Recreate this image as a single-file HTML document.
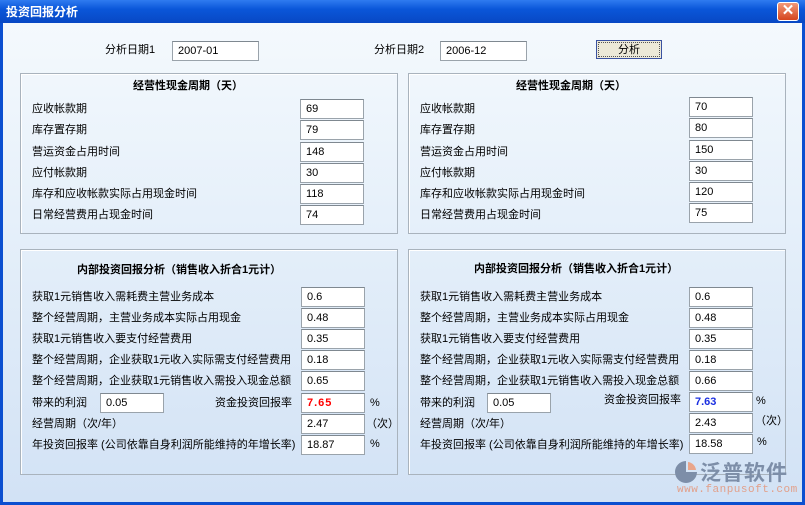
<!DOCTYPE html><html><head><meta charset="utf-8"><style>
*{margin:0;padding:0;box-sizing:border-box}
body{width:805px;height:505px;overflow:hidden;font-family:"Liberation Sans","Noto Sans CJK SC",sans-serif;font-size:11px;color:#000;position:relative;background:#0b4fd0}
#tb{position:absolute;left:0;top:0;width:805px;height:23px;background:linear-gradient(#2f7bf0,#0a56d9 40%,#0848c4);color:#fff;font-weight:bold;font-size:12px;padding:3px 0 0 6px}
#cl{position:absolute;left:777px;top:2px;width:22px;height:19px;border:1px solid #fff;border-radius:3px;background:linear-gradient(#f29a7a,#d5451d);color:#fff;font-size:15px;text-align:center;line-height:16px;font-weight:bold}
#bd{position:absolute;left:3px;top:23px;width:799px;height:479px;background:linear-gradient(#f4f9fd,#e6f0fa 40%,#d2e2f5)}
.a{position:absolute;white-space:nowrap;margin-top:-2px}
.p{position:absolute;border:1px solid #a9b3bd;box-shadow:1px 1px 0 #fff inset}
.i{position:absolute;background:#fff;border:1px solid #9aa3ab;border-top-color:#7f8890;height:20px;width:64px;padding:3px 0 0 5px;font-size:11px}
.t{font-weight:bold}
</style></head><body>
<div id="tb">投资回报分析</div><div id="cl">✕</div>
<div id="bd"></div>
<div class="a" style="left:105px;top:43px">分析日期1</div>
<div class="i" style="left:172px;top:41px;width:87px">2007-01</div>
<div class="a" style="left:374px;top:43px">分析日期2</div>
<div class="i" style="left:440px;top:41px;width:87px">2006-12</div>
<div class="a" style="left:596px;top:42px;width:66px;height:19px;border:1px solid #3a52a0;background:#ece9d8;outline:1px dotted #555;outline-offset:-3px;text-align:center;line-height:19px">分析</div>

<div class="p" style="left:20px;top:73px;width:378px;height:161px"></div>
<div class="p" style="left:408px;top:73px;width:378px;height:161px"></div>
<div class="p" style="left:20px;top:249px;width:378px;height:226px"></div>
<div class="p" style="left:408px;top:249px;width:378px;height:226px"></div>

<div class="a t" style="left:133px;top:79px">经营性现金周期（天）</div>
<div class="a t" style="left:516px;top:79px">经营性现金周期（天）</div>

<div class="a" style="left:32px;top:102px">应收帐款期</div><div class="i" style="left:300px;top:99px">69</div>
<div class="a" style="left:32px;top:123px">库存置存期</div><div class="i" style="left:300px;top:120px">79</div>
<div class="a" style="left:32px;top:145px">营运资金占用时间</div><div class="i" style="left:300px;top:142px">148</div>
<div class="a" style="left:32px;top:166px">应付帐款期</div><div class="i" style="left:300px;top:163px">30</div>
<div class="a" style="left:32px;top:187px">库存和应收帐款实际占用现金时间</div><div class="i" style="left:300px;top:184px">118</div>
<div class="a" style="left:32px;top:208px">日常经营费用占现金时间</div><div class="i" style="left:300px;top:205px">74</div>

<div class="a" style="left:420px;top:102px">应收帐款期</div><div class="i" style="left:689px;top:97px">70</div>
<div class="a" style="left:420px;top:123px">库存置存期</div><div class="i" style="left:689px;top:118px">80</div>
<div class="a" style="left:420px;top:145px">营运资金占用时间</div><div class="i" style="left:689px;top:140px">150</div>
<div class="a" style="left:420px;top:166px">应付帐款期</div><div class="i" style="left:689px;top:161px">30</div>
<div class="a" style="left:420px;top:187px">库存和应收帐款实际占用现金时间</div><div class="i" style="left:689px;top:182px">120</div>
<div class="a" style="left:420px;top:208px">日常经营费用占现金时间</div><div class="i" style="left:689px;top:203px">75</div>

<div class="a t" style="left:77px;top:263px">内部投资回报分析（销售收入折合1元计）</div>
<div class="a t" style="left:474px;top:262px">内部投资回报分析（销售收入折合1元计）</div>

<div class="a" style="left:32px;top:290px">获取1元销售收入需耗费主营业务成本</div><div class="i" style="left:301px;top:287px">0.6</div>
<div class="a" style="left:32px;top:311px">整个经营周期，主营业务成本实际占用现金</div><div class="i" style="left:301px;top:308px">0.48</div>
<div class="a" style="left:32px;top:332px">获取1元销售收入要支付经营费用</div><div class="i" style="left:301px;top:329px">0.35</div>
<div class="a" style="left:32px;top:353px">整个经营周期，企业获取1元收入实际需支付经营费用</div><div class="i" style="left:301px;top:350px">0.18</div>
<div class="a" style="left:32px;top:374px">整个经营周期，企业获取1元销售收入需投入现金总额</div><div class="i" style="left:301px;top:371px">0.65</div>
<div class="a" style="left:32px;top:396px">带来的利润</div><div class="i" style="left:100px;top:393px">0.05</div>
<div class="a" style="left:215px;top:396px">资金投资回报率</div><div class="i" style="left:301px;top:393px;color:#f00;font-weight:bold;letter-spacing:1px">7.65</div><div class="a" style="left:370px;top:399px">%</div>
<div class="a" style="left:32px;top:417px">经营周期（次/年）</div><div class="i" style="left:301px;top:414px">2.47</div><div class="a" style="left:366px;top:417px">（次）</div>
<div class="a" style="left:32px;top:438px">年投资回报率 (公司依靠自身利润所能维持的年增长率)</div><div class="i" style="left:301px;top:435px">18.87</div><div class="a" style="left:370px;top:440px">%</div>

<div class="a" style="left:420px;top:290px">获取1元销售收入需耗费主营业务成本</div><div class="i" style="left:689px;top:287px">0.6</div>
<div class="a" style="left:420px;top:311px">整个经营周期，主营业务成本实际占用现金</div><div class="i" style="left:689px;top:308px">0.48</div>
<div class="a" style="left:420px;top:332px">获取1元销售收入要支付经营费用</div><div class="i" style="left:689px;top:329px">0.35</div>
<div class="a" style="left:420px;top:353px">整个经营周期，企业获取1元收入实际需支付经营费用</div><div class="i" style="left:689px;top:350px">0.18</div>
<div class="a" style="left:420px;top:374px">整个经营周期，企业获取1元销售收入需投入现金总额</div><div class="i" style="left:689px;top:371px">0.66</div>
<div class="a" style="left:420px;top:396px">带来的利润</div><div class="i" style="left:487px;top:393px">0.05</div>
<div class="a" style="left:604px;top:393px">资金投资回报率</div><div class="i" style="left:689px;top:392px;color:#1a2ee0;font-weight:bold">7.63</div><div class="a" style="left:756px;top:397px">%</div>
<div class="a" style="left:420px;top:417px">经营周期（次/年）</div><div class="i" style="left:689px;top:413px">2.43</div><div class="a" style="left:755px;top:414px">（次）</div>
<div class="a" style="left:420px;top:438px">年投资回报率 (公司依靠自身利润所能维持的年增长率)</div><div class="i" style="left:689px;top:434px">18.58</div><div class="a" style="left:757px;top:438px">%</div>

<svg style="position:absolute;left:673px;top:459px" width="26" height="26" viewBox="0 0 26 26"><path d="M13 2 A11 11 0 1 0 24 13 L13 13 Z" fill="#7d8ea8"/><path d="M15 3 A9 9 0 0 1 23 11 L15 11Z" fill="#e9a58a"/></svg>
<div class="a" style="left:700px;top:459px;font-size:21px;color:#7d8ea8;font-weight:bold;letter-spacing:1px">泛普软件</div>
<div class="a" style="left:677px;top:486px;font-size:11px;color:#e2a08a;font-family:'Liberation Mono',monospace;letter-spacing:0.5px">www.fanpusoft.com</div>
</body></html>
